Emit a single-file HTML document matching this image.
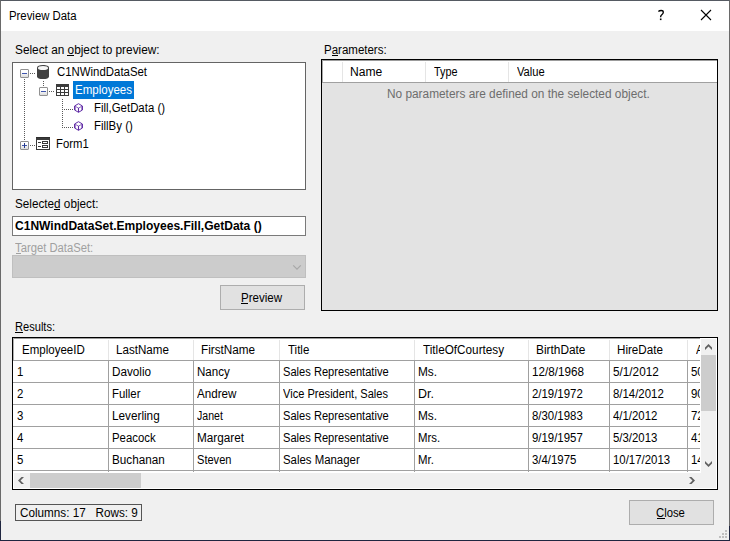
<!DOCTYPE html>
<html><head><meta charset="utf-8"><title>Preview Data</title>
<style>
html,body{margin:0;padding:0;}
body{width:730px;height:541px;overflow:hidden;background:#f0f0f0;font-family:"Liberation Sans",sans-serif;font-size:12px;}
#w{position:relative;width:730px;height:541px;overflow:hidden;background:#f0f0f0;}
#w *{position:absolute;box-sizing:border-box;}
.t{white-space:pre;line-height:12px;height:12px;transform-origin:0 0;color:#000;font-style:normal;}
.u{height:1px;}
.dh{height:1px;background:repeating-linear-gradient(90deg,#5a5a5a 0 1px,transparent 1px 2px);}
.dv{width:1px;background:repeating-linear-gradient(180deg,#5a5a5a 0 1px,transparent 1px 2px);}
.ex{width:9px;height:9px;border:1px solid #919191;border-radius:1px;background:linear-gradient(#fff 30%,#dcdcdc);}
.mi{left:1px;top:3px;width:5px;height:1px;background:#3f55ad;}
.pl{left:3px;top:1px;width:1px;height:5px;background:#243a8c;}
.gl{background:#a0a0a0;}
.hl{background:#e5e5e5;}
.btn{background:#e1e1e1;border:1px solid #adadad;}
</style></head><body>
<div id="w">
<!-- window frame -->
<div style="left:0;top:0;width:730px;height:541px;border:1px solid #6a6a6a;border-top-color:#555a62;border-bottom-color:#1f2640;"></div>
<div style="left:1px;top:1px;width:728px;height:30px;background:#fff;"></div>
<i style="left:729px;top:526px;width:1px;height:15px;background:#1f2640"></i><i style="left:0;top:521px;width:1px;height:20px;background:#1f2640"></i>
<!-- caption buttons -->
<svg style="left:700px;top:9px" width="13" height="13" viewBox="0 0 13 13"><path d="M1 1 L11 11 M11 1 L1 11" stroke="#000" stroke-width="1.1" fill="none"/></svg>
<svg style="left:650px;top:5px" width="24" height="20" viewBox="0 0 24 20"><path d="M8.4 6.4 Q9.4 5.5 11.2 5.5 Q13.3 5.5 13.3 7.3 Q13.3 8.6 11.8 9.7 Q10.6 10.6 10.6 12.3" fill="none" stroke="#000" stroke-width="1.35"/><rect x="9.9" y="13.5" width="1.6" height="1.6" fill="#000"/></svg>

<!-- tree -->
<div style="left:12px;top:62px;width:294px;height:128px;border:1px solid #646464;background:#fff;"></div>
<div style="left:73px;top:81px;width:61px;height:18px;background:#0078d7;"></div>
<i class="ex" style="left:20px;top:69px"><b class="mi"></b></i>
<i class="ex" style="left:39px;top:87px"><b class="mi"></b></i>
<i class="ex" style="left:20px;top:141px"><b class="mi"></b><b class="pl"></b></i>
<i class="dh" style="left:30px;top:73px;width:5px"></i>
<i class="dv" style="left:24px;top:79px;height:61px"></i>
<i class="dv" style="left:43px;top:81px;height:5px"></i>
<i class="dh" style="left:49px;top:91px;width:5px"></i>
<i class="dv" style="left:62px;top:99px;height:29px"></i>
<i class="dh" style="left:64px;top:109px;width:9px"></i>
<i class="dh" style="left:64px;top:127px;width:9px"></i>
<i class="dh" style="left:30px;top:145px;width:5px"></i>
<svg class="ic" style="left:37px;top:65px" width="12" height="14" viewBox="0 0 12 14"><path d="M0 2.6 C0 1 2.5 0 6 0 C9.5 0 12 1 12 2.6 V11.4 C12 13 9.5 14 6 14 C2.5 14 0 13 0 11.4 Z" fill="#404040"/><ellipse cx="6" cy="3.05" rx="5.05" ry="2" fill="#f6f6f6"/></svg>
<svg class="ic" style="left:56px;top:84px" width="13" height="12" viewBox="0 0 13 12"><rect width="13" height="12" fill="#3c3c3c"/><rect x="1" y="3" width="3" height="2" fill="#fff"/><rect x="5" y="3" width="3" height="2" fill="#fff"/><rect x="9" y="3" width="3" height="2" fill="#fff"/><rect x="1" y="6" width="3" height="2" fill="#fff"/><rect x="5" y="6" width="3" height="2" fill="#fff"/><rect x="9" y="6" width="3" height="2" fill="#fff"/><rect x="1" y="9" width="3" height="2" fill="#fff"/><rect x="5" y="9" width="3" height="2" fill="#fff"/><rect x="9" y="9" width="3" height="2" fill="#fff"/></svg>
<svg class="ic" style="left:74px;top:103px" width="9" height="10" viewBox="0 0 9 10"><g fill="none" stroke="#5f2aa5" stroke-linejoin="round"><path d="M4.5 0.7 L8.3 2.9 V7.1 L4.5 9.3 L0.7 7.1 V2.9 Z" stroke-width="1"/><path d="M0.8 2.9 V7.1 M8.2 2.9 V7.1" stroke-width="1.25"/><path d="M4.5 5 V9.2" stroke-width="1.1"/><path d="M1.6 3.5 L4.5 5.1 L7.4 3.5" stroke-width="0.9" opacity="0.8"/></g></svg>
<svg class="ic" style="left:74px;top:121px" width="9" height="10" viewBox="0 0 9 10"><g fill="none" stroke="#5f2aa5" stroke-linejoin="round"><path d="M4.5 0.7 L8.3 2.9 V7.1 L4.5 9.3 L0.7 7.1 V2.9 Z" stroke-width="1"/><path d="M0.8 2.9 V7.1 M8.2 2.9 V7.1" stroke-width="1.25"/><path d="M4.5 5 V9.2" stroke-width="1.1"/><path d="M1.6 3.5 L4.5 5.1 L7.4 3.5" stroke-width="0.9" opacity="0.8"/></g></svg>
<svg class="ic" style="left:36px;top:137px" width="14" height="13" viewBox="0 0 14 13" shape-rendering="crispEdges"><rect width="14" height="13" fill="#3a3a3a"/><rect width="14" height="1" fill="#2d2d2d"/><rect x="1" y="3" width="12" height="9" fill="#fff"/><rect x="2" y="5" width="3" height="1" fill="#3a3a3a"/><rect x="2" y="9" width="3" height="1" fill="#3a3a3a"/><rect x="6" y="4" width="6" height="3" fill="#3a3a3a"/><rect x="7" y="5" width="4" height="1" fill="#fff"/><rect x="6" y="8" width="6" height="3" fill="#3a3a3a"/><rect x="7" y="9" width="4" height="1" fill="#fff"/></svg>

<!-- selected object textbox -->
<div style="left:12px;top:216px;width:294px;height:20px;border:1px solid #7a7a7a;background:#fff;"></div>
<!-- disabled combo -->
<div style="left:12px;top:255px;width:294px;height:23px;border:1px solid #bfbfbf;background:#cccccc;"></div>
<svg style="left:292px;top:263.6px" width="11" height="8" viewBox="0 0 11 8"><path d="M1.2 1.3 L5 5.1 L8.8 1.3" fill="none" stroke="#a8a8a8" stroke-width="1.2"/></svg>
<!-- Preview button -->
<div class="btn" style="left:220px;top:285px;width:85px;height:25px;"></div>

<!-- parameters panel -->
<div style="left:321px;top:59px;width:397px;height:252px;border:1px solid #000;background:#e3e3e3;"></div>
<div style="left:322px;top:60px;width:395px;height:22px;background:#fff;"></div>
<i class="gl" style="left:322px;top:82px;width:395px;height:1px"></i>
<i style="left:322px;top:60px;width:395px;height:1px;background:#9c9c9c"></i>
<i style="left:322px;top:60px;width:1px;height:22px;background:#a8a8a8"></i>
<i class="hl" style="left:342px;top:62px;width:1px;height:20px"></i>
<i class="hl" style="left:425px;top:62px;width:1px;height:20px"></i>
<i class="hl" style="left:508px;top:62px;width:1px;height:20px"></i>

<!-- results grid -->
<div style="left:12px;top:337px;width:706px;height:153px;border:1px solid #000;background:#fff;"></div>
<div id="gc" style="left:13px;top:338px;width:687px;height:134px;overflow:hidden;background:#fff;">
<div style="left:-13px;top:-338px;width:730px;height:541px;">
<i class="hl" style="left:13px;top:338px;width:688px;height:1px;background:#9c9c9c"></i>
<i class="hl" style="left:13px;top:338px;width:1px;height:22px;background:#b0b0b0"></i>
<i class="hl" style="left:108px;top:340px;width:1px;height:20px"></i>
<i class="gl" style="left:108px;top:360px;width:1px;height:113px"></i>
<i class="hl" style="left:193px;top:340px;width:1px;height:20px"></i>
<i class="gl" style="left:193px;top:360px;width:1px;height:113px"></i>
<i class="hl" style="left:279px;top:340px;width:1px;height:20px"></i>
<i class="gl" style="left:279px;top:360px;width:1px;height:113px"></i>
<i class="hl" style="left:414px;top:340px;width:1px;height:20px"></i>
<i class="gl" style="left:414px;top:360px;width:1px;height:113px"></i>
<i class="hl" style="left:528px;top:340px;width:1px;height:20px"></i>
<i class="gl" style="left:528px;top:360px;width:1px;height:113px"></i>
<i class="hl" style="left:609px;top:340px;width:1px;height:20px"></i>
<i class="gl" style="left:609px;top:360px;width:1px;height:113px"></i>
<i class="hl" style="left:687px;top:340px;width:1px;height:20px"></i>
<i class="gl" style="left:687px;top:360px;width:1px;height:113px"></i>
<i class="gl" style="left:13px;top:360px;width:688px;height:1px"></i>
<i class="gl" style="left:13px;top:382px;width:688px;height:1px"></i>
<i class="gl" style="left:13px;top:404px;width:688px;height:1px"></i>
<i class="gl" style="left:13px;top:426px;width:688px;height:1px"></i>
<i class="gl" style="left:13px;top:448px;width:688px;height:1px"></i>
<i class="gl" style="left:13px;top:470px;width:688px;height:1px"></i>
<span class="t" style="left:22.04px;top:344px;transform:scaleX(0.9594);">EmployeeID</span>
<span class="t" style="left:116.03px;top:344px;transform:scaleX(0.9658);">LastName</span>
<span class="t" style="left:201.02px;top:344px;transform:scaleX(0.9778);">FirstName</span>
<span class="t" style="left:288.28px;top:344px;transform:scaleX(0.9566);">Title</span>
<span class="t" style="left:422.88px;top:344px;transform:scaleX(0.9778);">TitleOfCourtesy</span>
<span class="t" style="left:536.01px;top:344px;transform:scaleX(0.9881);">BirthDate</span>
<span class="t" style="left:617.43px;top:344px;transform:scaleX(0.9696);">HireDate</span>
<span class="t" style="left:695.99px;top:344px;transform:scaleX(0.9500);">Address</span>
<span class="t" style="left:16.70px;top:366px;transform:scaleX(0.9500);">1</span>
<span class="t" style="left:112.30px;top:366px;transform:scaleX(0.9763);">Davolio</span>
<span class="t" style="left:197.30px;top:366px;transform:scaleX(0.9617);">Nancy</span>
<span class="t" style="left:283.40px;top:366px;transform:scaleX(0.9259);">Sales Representative</span>
<span class="t" style="left:418.20px;top:366px;transform:scaleX(0.9866);">Ms.</span>
<span class="t" style="left:531.90px;top:366px;transform:scaleX(0.9750);">12/8/1968</span>
<span class="t" style="left:612.90px;top:366px;transform:scaleX(0.9791);">5/1/2012</span>
<span class="t" style="left:691.30px;top:366px;transform:scaleX(0.9500);">507 - 20th Ave. E.</span>
<span class="t" style="left:16.70px;top:388px;transform:scaleX(0.9500);">2</span>
<span class="t" style="left:112.30px;top:388px;transform:scaleX(0.9488);">Fuller</span>
<span class="t" style="left:197.30px;top:388px;transform:scaleX(0.9685);">Andrew</span>
<span class="t" style="left:283.40px;top:388px;transform:scaleX(0.9220);">Vice President, Sales</span>
<span class="t" style="left:418.20px;top:388px;transform:scaleX(1.0347);">Dr.</span>
<span class="t" style="left:531.90px;top:388px;transform:scaleX(0.9500);">2/19/1972</span>
<span class="t" style="left:612.90px;top:388px;transform:scaleX(0.9500);">8/14/2012</span>
<span class="t" style="left:691.30px;top:388px;transform:scaleX(0.9500);">908 W. Capital Way</span>
<span class="t" style="left:16.70px;top:410px;transform:scaleX(0.9500);">3</span>
<span class="t" style="left:112.30px;top:410px;transform:scaleX(0.9787);">Leverling</span>
<span class="t" style="left:197.30px;top:410px;transform:scaleX(0.8800);">Janet</span>
<span class="t" style="left:283.40px;top:410px;transform:scaleX(0.9259);">Sales Representative</span>
<span class="t" style="left:418.20px;top:410px;transform:scaleX(0.9866);">Ms.</span>
<span class="t" style="left:531.90px;top:410px;transform:scaleX(0.9500);">8/30/1983</span>
<span class="t" style="left:612.90px;top:410px;transform:scaleX(0.9500);">4/1/2012</span>
<span class="t" style="left:691.30px;top:410px;transform:scaleX(0.9500);">722 Moss Bay Blvd.</span>
<span class="t" style="left:16.70px;top:432px;transform:scaleX(0.9500);">4</span>
<span class="t" style="left:112.30px;top:432px;transform:scaleX(0.9468);">Peacock</span>
<span class="t" style="left:197.30px;top:432px;transform:scaleX(0.9787);">Margaret</span>
<span class="t" style="left:283.40px;top:432px;transform:scaleX(0.9259);">Sales Representative</span>
<span class="t" style="left:418.20px;top:432px;transform:scaleX(0.9500);">Mrs.</span>
<span class="t" style="left:531.90px;top:432px;transform:scaleX(0.9500);">9/19/1957</span>
<span class="t" style="left:612.90px;top:432px;transform:scaleX(0.9500);">5/3/2013</span>
<span class="t" style="left:691.30px;top:432px;transform:scaleX(0.9500);">4110 Old Redmond Rd.</span>
<span class="t" style="left:16.70px;top:454px;transform:scaleX(0.9500);">5</span>
<span class="t" style="left:112.30px;top:454px;transform:scaleX(0.9760);">Buchanan</span>
<span class="t" style="left:197.30px;top:454px;transform:scaleX(0.9227);">Steven</span>
<span class="t" style="left:283.40px;top:454px;transform:scaleX(0.9500);">Sales Manager</span>
<span class="t" style="left:418.20px;top:454px;transform:scaleX(0.9500);">Mr.</span>
<span class="t" style="left:531.90px;top:454px;transform:scaleX(0.9500);">3/4/1975</span>
<span class="t" style="left:612.90px;top:454px;transform:scaleX(0.9500);">10/17/2013</span>
<span class="t" style="left:691.30px;top:454px;transform:scaleX(0.9500);">14 Garrett Hill</span>
</div></div>
<!-- v scrollbar -->
<div style="left:701px;top:339px;width:15px;height:134px;background:#f0f0f0;"></div>
<div style="left:701px;top:355px;width:15px;height:56px;background:#cdcdcd;"></div>
<svg style="left:704px;top:343px" width="9" height="8" viewBox="0 0 9 8"><path d="M4.5 1 L8 4.5 V7 L4.5 3.5 L1 7 V4.5 Z" fill="#606060"/></svg>
<svg style="left:704px;top:460px" width="9" height="8" viewBox="0 0 9 8"><path d="M4.5 7 L8 3.5 V1 L4.5 4.5 L1 1 V3.5 Z" fill="#606060"/></svg>
<!-- h scrollbar + corner -->
<div style="left:14px;top:473px;width:702px;height:15px;background:#f0f0f0;"></div>
<div style="left:30px;top:473px;width:111px;height:15px;background:#cdcdcd;"></div>
<svg style="left:17px;top:476px" width="8" height="9" viewBox="0 0 8 9"><path d="M1 4.5 L4.5 1 H7 L3.5 4.5 L7 8 H4.5 Z" fill="#606060"/></svg>
<svg style="left:688px;top:476px" width="8" height="9" viewBox="0 0 8 9"><path d="M7 4.5 L3.5 1 H1 L4.5 4.5 L1 8 H3.5 Z" fill="#606060"/></svg>

<!-- status box -->
<div style="left:15px;top:504px;width:127px;height:17px;border:1px solid #555;"></div>
<!-- Close button -->
<div class="btn" style="left:629px;top:500px;width:85px;height:25px;"></div>
<!-- resize grip -->
<svg style="left:716px;top:529px" width="12" height="12" viewBox="0 0 12 12" fill="#bfbfbf"><rect x="9" y="1" width="2" height="2"/><rect x="6" y="4" width="2" height="2"/><rect x="9" y="4" width="2" height="2"/><rect x="3" y="7" width="2" height="2"/><rect x="6" y="7" width="2" height="2"/><rect x="9" y="7" width="2" height="2"/></svg>

<span class="t" style="left:8.85px;top:10px;transform:scaleX(0.9468);">Preview Data</span>
<span class="t" style="left:14.61px;top:44px;transform:scaleX(0.9851);">Select an object to preview:</span>
<i class="u" style="left:67.2px;top:55px;width:6.6px;background:#000"></i>
<span class="t" style="left:56.77px;top:66px;transform:scaleX(0.9505);">C1NWindDataSet</span>
<span class="t" style="left:75.44px;top:84px;transform:scaleX(0.9594);color:#fff;">Employees</span>
<span class="t" style="left:94.35px;top:102px;transform:scaleX(0.9507);">Fill,GetData ()</span>
<span class="t" style="left:94.35px;top:120px;transform:scaleX(0.9538);">FillBy ()</span>
<span class="t" style="left:56.36px;top:138px;transform:scaleX(0.9423);">Form1</span>
<span class="t" style="left:14.72px;top:198px;transform:scaleX(0.9768);">Selected object:</span>
<i class="u" style="left:53.8px;top:209px;width:6.5px;background:#000"></i>
<span class="t" style="left:15.30px;top:220px;transform:scaleX(1.0029);font-weight:bold;">C1NWindDataSet.Employees.Fill,GetData ()</span>
<span class="t" style="left:15.48px;top:242px;transform:scaleX(0.9379);color:#a0a0a0;">Target DataSet:</span>
<i class="u" style="left:15.5px;top:253px;width:5.6px;background:#a0a0a0"></i>
<span class="t" style="left:240.84px;top:292px;transform:scaleX(0.9617);">Preview</span>
<i class="u" style="left:240.8px;top:303px;width:7.7px;background:#000"></i>
<span class="t" style="left:323.84px;top:44px;transform:scaleX(0.9585);">Parameters:</span>
<i class="u" style="left:331.5px;top:55px;width:6.4px;background:#000"></i>
<span class="t" style="left:350.09px;top:66px;transform:scaleX(1.0073);">Name</span>
<span class="t" style="left:433.89px;top:66px;transform:scaleX(0.9036);">Type</span>
<span class="t" style="left:516.69px;top:66px;transform:scaleX(0.9303);">Value</span>
<span class="t" style="left:387.01px;top:88px;transform:scaleX(0.9871);color:#6d6d6d;">No parameters are defined on the selected object.</span>
<span class="t" style="left:14.98px;top:321px;transform:scaleX(0.9244);">Results:</span>
<i class="u" style="left:15.0px;top:332px;width:8.0px;background:#000"></i>
<span class="t" style="left:19.76px;top:507px;transform:scaleX(0.9754);">Columns: 17   Rows: 9</span>
<span class="t" style="left:656.48px;top:507px;transform:scaleX(0.9407);">Close</span>
<i class="u" style="left:656.5px;top:518px;width:8.2px;background:#000"></i>
</div>
</body></html>
